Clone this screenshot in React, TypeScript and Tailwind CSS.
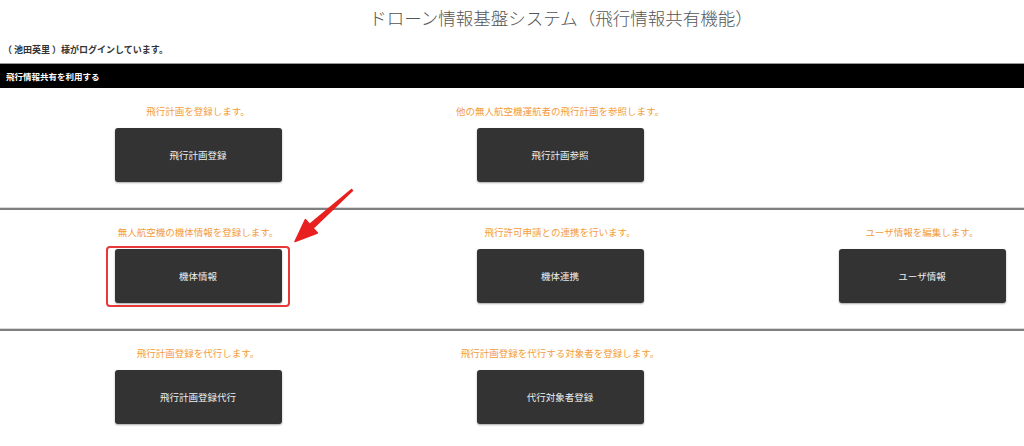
import React from "react";

type Item = { caption: string; label: string; highlight?: boolean } | null;

const rows: Item[][] = [
  [
    { caption: "飛行計画を登録します。", label: "飛行計画登録" },
    { caption: "他の無人航空機運航者の飛行計画を参照します。", label: "飛行計画参照" },
    null,
  ],
  [
    { caption: "無人航空機の機体情報を登録します。", label: "機体情報", highlight: true },
    { caption: "飛行許可申請との連携を行います。", label: "機体連携" },
    { caption: "ユーザ情報を編集します。", label: "ユーザ情報" },
  ],
  [
    { caption: "飛行計画登録を代行します。", label: "飛行計画登録代行" },
    { caption: "飛行計画登録を代行する対象者を登録します。", label: "代行対象者登録" },
    null,
  ],
];

const MenuCell: React.FC<{ item: Item }> = ({ item }) => {
  if (!item) return <div />;
  return (
    <div className="flex flex-col items-center">
      <p className="text-[9.5px] leading-[14px] text-[#f39c3c]">{item.caption}</p>
      <div className="relative mt-[10px]">
        {item.highlight && (
          <div className="absolute -left-[9px] -right-[8px] -top-[3px] -bottom-[4px] rounded-[4px] border-2 border-[#e8383a]" />
        )}
        <button className="relative w-[167px] h-[54px] rounded-[3px] bg-[#333333] text-[#f0f0f0] text-[9.5px] shadow-[0_1px_2px_rgba(0,0,0,0.35)]">
          {item.label}
        </button>
      </div>
    </div>
  );
};

export default function App() {
  return (
    <div className="w-full overflow-hidden bg-white" style={{ fontFamily: '"Noto Sans CJK JP", "Noto Sans", sans-serif' }}>
      <div className="relative w-[1122px]">
        <div className="h-[36px] flex items-center justify-center">
          <h1 className="text-[17.5px] font-light text-[#555]">ドローン情報基盤システム（飛行情報共有機能）</h1>
        </div>
        <p className="mt-[7px] pl-[3px] h-[14px] leading-[14px] text-[9px] font-bold text-[#333]">（ 池田英里 ）様がログインしています。</p>
        <div className="mt-[6px] w-[1024px] h-[25px] bg-black border-t border-[#999] flex items-center pl-[6px]">
          <span className="text-[8.5px] font-bold text-white">飛行情報共有を利用する</span>
        </div>

        {rows.map((row, i) => (
          <div key={i}>
            {i > 0 && <div className="w-[1024px] border-t border-[#d8d8d8] border-b-2 border-b-[#7f7f7f] h-0" />}
            <div className={`grid grid-cols-[362px_362px_362px] pl-[17px] pb-[25px] ${i === 0 ? "pt-[16px]" : "pt-[15px]"}`}>
              {row.map((item, j) => (
                <MenuCell key={j} item={item} />
              ))}
            </div>
          </div>
        ))}

        <svg className="absolute left-0 top-0 pointer-events-none" width="400" height="260" viewBox="0 0 400 260">
          <polygon
            points="352.5,190.5 313.1,228.2 317.4,233 295,241.5 305.4,219.6 309.7,224.4 351.5,189.5"
            fill="#e8201f"
            stroke="#e8201f"
            strokeWidth="1.5"
            strokeLinejoin="round"
          />
        </svg>
      </div>
    </div>
  );
}
